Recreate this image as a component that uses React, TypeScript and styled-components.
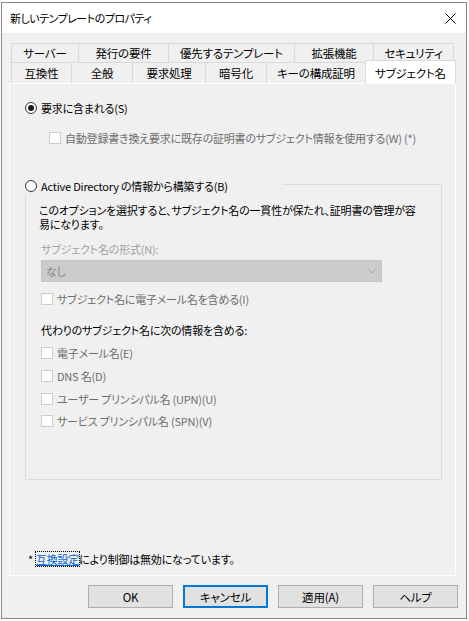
import React from 'react';
import styled, { createGlobalStyle } from 'styled-components';

const GlobalStyle = createGlobalStyle`
  html, body { margin: 0; padding: 0; background: #ffffff; }
  body {
    font-family: "Noto Sans CJK JP", "Noto Sans", sans-serif;
    font-size: 11px;
    letter-spacing: -0.2px;
    color: #000;
    font-feature-settings: "palt";
  }
  * { box-sizing: border-box; }
`;

const Window = styled.div`
  margin: 2px 0 0 1px;
  width: 466px;
  height: 617px;
  border: 1px solid #888888;
  background: #f0f0f0;
  display: flex;
  flex-direction: column;
`;

const TitleBar = styled.div`
  height: 30px;
  background: #ffffff;
  display: flex;
  align-items: center;
  padding-left: 8px;
`;

const Title = styled.div`
  flex: 1;
  font-size: 11px;
  letter-spacing: -0.5px;
  line-height: 14px;
  white-space: nowrap;
`;

const CloseButton = styled.div`
  width: 31px;
  height: 30px;
  display: flex;
  align-items: center;
  justify-content: center;
`;

const Body = styled.div`
  flex: 1;
  display: flex;
  flex-direction: column;
  padding: 10px 8px 0 7px;
`;

const TabStrip = styled.div`
  display: flex;
  flex-direction: column;
  padding-left: 2px;
`;

const TabRow = styled.div<{ $h: number }>`
  display: flex;
  height: ${p => p.$h}px;
`;

const Tab = styled.div<{ $w: number; $selected?: boolean }>`
  flex: none;
  width: ${p => p.$w}px;
  height: ${p => (p.$selected ? '24px' : '100%')};
  margin-left: -1px;
  margin-top: ${p => (p.$selected ? '-2px' : '0')};
  &:first-child { margin-left: 0; }
  border: 1px solid #d9d9d9;
  border-bottom: none;
  background: ${p => (p.$selected ? '#ffffff' : '#f0f0f0')};
  position: ${p => (p.$selected ? 'relative' : 'static')};
  z-index: ${p => (p.$selected ? 1 : 'auto')};
  display: flex;
  align-items: center;
  justify-content: center;
  font-size: 11.5px;
  line-height: 14px;
  white-space: nowrap;
`;

const Panel = styled.div`
  width: 447px;
  height: 493px;
  border: 1px solid #ffffff;
  display: flex;
  flex-direction: column;
  padding: 16px 0 9px 0;
`;

const OptionRow = styled.div<{ $indent: number; $top: number }>`
  display: flex;
  align-items: center;
  gap: 4px;
  height: 16px;
  margin: ${p => p.$top}px 0 0 ${p => p.$indent}px;
  line-height: 14px;
  white-space: nowrap;
`;

const RadioCircle = styled.span<{ $checked?: boolean }>`
  flex: none;
  width: 12px;
  height: 12px;
  border-radius: 50%;
  border: 1px solid #333333;
  background: #ffffff;
  display: flex;
  align-items: center;
  justify-content: center;
  &::after {
    content: "";
    display: ${p => (p.$checked ? 'block' : 'none')};
    width: 6px;
    height: 6px;
    border-radius: 50%;
    background: #1a1a1a;
  }
`;

const CheckBox = styled.span`
  flex: none;
  width: 12px;
  height: 12px;
  border: 1px solid #cccccc;
  background: #ffffff;
`;

const Label = styled.span<{ $disabled?: boolean }>`
  color: ${p => (p.$disabled ? '#6d6d6d' : '#000000')};
`;

const GroupBox = styled.div`
  margin: 38px 13px 0 15px;
  height: 296px;
  border: 1px solid #dcdcdc;
  display: flex;
  flex-direction: column;
`;

const GroupLegend = styled.div`
  margin: -7px 0 0 -1px;
  width: 257px;
  height: 16px;
  background: #f0f0f0;
  display: flex;
  align-items: center;
  gap: 4px;
  line-height: 14px;
  white-space: nowrap;
`;

const Description = styled.p`
  margin: 9px 0 0 13px;
  line-height: 14px;
  white-space: nowrap;
`;

const FieldLabel = styled.div<{ $disabled?: boolean; $top: number }>`
  margin: ${p => p.$top}px 0 0 15px;
  line-height: 14px;
  color: ${p => (p.$disabled ? '#a0a0a0' : '#000000')};
  white-space: nowrap;
`;

const Select = styled.div`
  margin: 4px 0 0 15px;
  width: 341px;
  height: 22px;
  background: #cccccc;
  border: 1px solid #c4c4c4;
  display: flex;
  align-items: center;
  padding: 0 4px 0 4px;
  color: #838383;
  line-height: 14px;
`;

const SelectValue = styled.span`
  flex: 1;
`;

const CheckRow = styled.div<{ $top: number }>`
  display: flex;
  align-items: center;
  gap: 4px;
  height: 14px;
  margin: ${p => p.$top}px 0 0 15px;
  line-height: 14px;
  white-space: nowrap;
`;

const Footnote = styled.div`
  margin: auto 0 0 18px;
  height: 14px;
  line-height: 14px;
  display: flex;
  align-items: center;
  white-space: nowrap;
`;

const LinkText = styled.span`
  color: #0066cc;
  text-decoration: underline;
  outline: 1px dotted #000000;
  outline-offset: 0px;
  margin-left: 3px;
`;

const ButtonRow = styled.div`
  margin-top: 9px;
  display: flex;
  justify-content: flex-end;
  gap: 10px;
`;

const Button = styled.div<{ $focused?: boolean }>`
  width: 85px;
  height: 23px;
  background: #e1e1e1;
  border: ${p => (p.$focused ? '2px solid #0078d7' : '1px solid #adadad')};
  display: flex;
  align-items: center;
  justify-content: center;
  font-size: 11.5px;
  line-height: 14px;
  white-space: nowrap;
`;

const row1 = [
  { label: 'サーバー', w: 68 },
  { label: '発行の要件', w: 91 },
  { label: '優先するテンプレート', w: 127 },
  { label: '拡張機能', w: 80 },
  { label: 'セキュリティ', w: 81 },
];

const row2 = [
  { label: '互換性', w: 61 },
  { label: '全般', w: 62 },
  { label: '要求処理', w: 74 },
  { label: '暗号化', w: 62 },
  { label: 'キーの構成証明', w: 100 },
  { label: 'サブジェクト名', w: 91, selected: true },
];

const altNames = [
  { label: '電子メール名(E)', top: 9 },
  { label: 'DNS 名(D)', top: 9 },
  { label: 'ユーザー プリンシパル名 (UPN)(U)', top: 9 },
  { label: 'サービス プリンシパル名 (SPN)(V)', top: 8 },
];

export default function App() {
  return (
    <>
      <GlobalStyle />
      <Window>
        <TitleBar>
          <Title>新しいテンプレートのプロパティ</Title>
          <CloseButton>
            <svg width="11" height="11" viewBox="0 0 11 11">
              <path d="M0.5 0.5 L10.5 10.5 M10.5 0.5 L0.5 10.5" stroke="#000" strokeWidth="1" fill="none" />
            </svg>
          </CloseButton>
        </TitleBar>
        <Body>
          <TabStrip>
            <TabRow $h={19}>
              {row1.map(t => (
                <Tab key={t.label} $w={t.w}>{t.label}</Tab>
              ))}
            </TabRow>
            <TabRow $h={21}>
              {row2.map(t => (
                <Tab key={t.label} $w={t.w} $selected={t.selected}>{t.label}</Tab>
              ))}
            </TabRow>
          </TabStrip>
          <Panel>
            <OptionRow $indent={15} $top={0}>
              <RadioCircle $checked />
              <Label>要求に含まれる(S)</Label>
            </OptionRow>
            <OptionRow $indent={39} $top={14}>
              <CheckBox />
              <Label $disabled>自動登録書き換え要求に既存の証明書のサブジェクト情報を使用する(W) (*)</Label>
            </OptionRow>
            <GroupBox>
              <GroupLegend>
                <RadioCircle />
                <Label>Active Directory の情報から構築する(B)</Label>
              </GroupLegend>
              <Description>
                このオプションを選択すると、サブジェクト名の一貫性が保たれ、証明書の管理が容
                <br />
                易になります。
              </Description>
              <FieldLabel $disabled $top={11}>サブジェクト名の形式(N):</FieldLabel>
              <Select>
                <SelectValue>なし</SelectValue>
                <svg width="10" height="6" viewBox="0 0 10 6">
                  <path d="M0.5 0.5 L5 5 L9.5 0.5" stroke="#a8a8a8" strokeWidth="1" fill="none" />
                </svg>
              </Select>
              <CheckRow $top={10}>
                <CheckBox />
                <Label $disabled>サブジェクト名に電子メール名を含める(I)</Label>
              </CheckRow>
              <FieldLabel $top={17}>代わりのサブジェクト名に次の情報を含める:</FieldLabel>
              {altNames.map(a => (
                <CheckRow key={a.label} $top={a.top}>
                  <CheckBox />
                  <Label $disabled>{a.label}</Label>
                </CheckRow>
              ))}
            </GroupBox>
            <Footnote>
              <span>*</span>
              <LinkText>互換設定</LinkText>
              <span>により制御は無効になっています。</span>
            </Footnote>
          </Panel>
          <ButtonRow>
            <Button>OK</Button>
            <Button $focused>キャンセル</Button>
            <Button>適用(A)</Button>
            <Button>ヘルプ</Button>
          </ButtonRow>
        </Body>
      </Window>
    </>
  );
}
